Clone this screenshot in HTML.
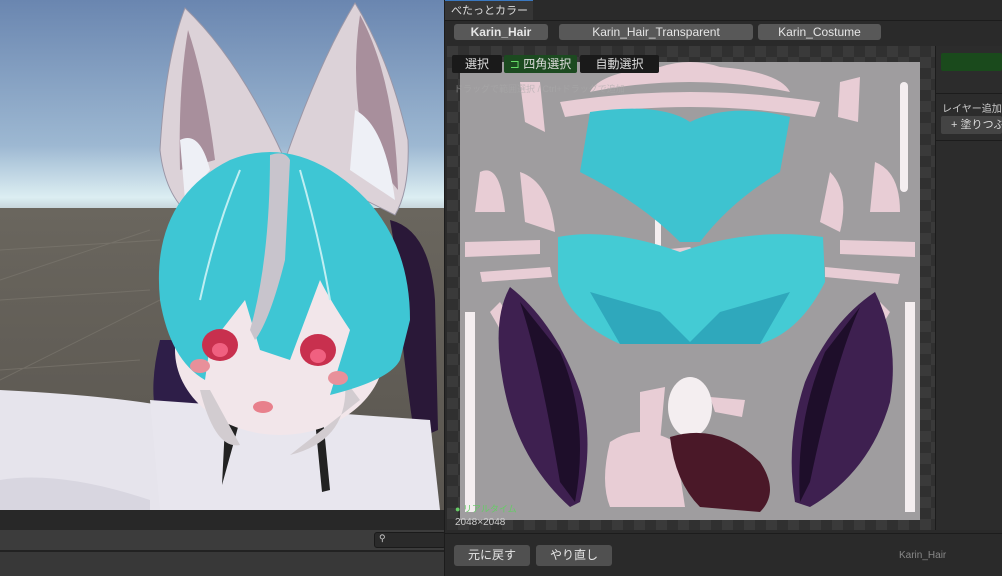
<!DOCTYPE html>
<html><head><meta charset="utf-8"><style>
*{margin:0;padding:0;box-sizing:border-box}
body{width:1002px;height:576px;overflow:hidden;background:#282828;font-family:"Liberation Sans","Noto Sans CJK JP",sans-serif;position:relative}
.a{position:absolute}
.btn{position:absolute;background:#585858;color:#e6e6e6;font-size:12px;text-align:center;border-radius:3px;line-height:16px}
.tool{position:absolute;background:#1a1a1a;color:#ddd;font-size:12px;line-height:18px;text-align:center;border-radius:2px}
</style></head><body>
<svg class="a" style="left:0;top:0" width="444" height="510">
<defs>
<linearGradient id="sky" x1="0" y1="0" x2="0" y2="1"><stop offset="0" stop-color="#6a86b0"/><stop offset="0.7" stop-color="#9db8d2"/><stop offset="0.95" stop-color="#dceef2"/><stop offset="1" stop-color="#c8d6dc"/></linearGradient>
<linearGradient id="gr" x1="0" y1="0" x2="0" y2="1"><stop offset="0" stop-color="#6a665e"/><stop offset="1" stop-color="#59554f"/></linearGradient>
</defs>
<rect width="444" height="208" fill="url(#sky)"/>
<rect y="208" width="444" height="302" fill="url(#gr)"/>
<g stroke="#7a766e" stroke-width="1" fill="none" opacity=".7">
<path d="M0 250 L160 240 M0 300 L150 290 M0 370 L140 360 M0 450 L140 440 M0 280 L150 230 M0 380 L160 300"/>
</g>
<path d="M390 220 Q430 230 435 300 L438 430 L415 440 Q400 340 395 250Z" fill="#2a1838"/>
<path d="M160 340 Q150 380 155 410 L200 410 Q190 370 180 340Z" fill="#2e1e48"/>
<path d="M185 8 Q165 60 160 150 Q165 195 190 215 L285 160 Q240 60 185 8Z" fill="#dcd2d8" stroke="#9a96a6"/>
<path d="M188 30 Q178 90 180 170 L215 160 Q205 80 188 30Z" fill="#a88f9c"/>
<path d="M355 3 Q390 60 408 140 Q410 190 395 215 L285 160 Q320 60 355 3Z" fill="#dcd2d8" stroke="#9a96a6"/>
<path d="M360 15 Q395 80 398 190 L365 150 Q350 80 360 15Z" fill="#a88f9c"/>
<path d="M180 140 Q200 130 210 170 L185 200Z M355 110 Q385 125 395 200 L350 170Z" fill="#eef0f6"/>
<path d="M0 390 Q100 395 160 405 L170 510 L0 510Z" fill="#e6e4ec"/>
<path d="M150 400 L430 420 L440 510 L160 510Z" fill="#e8e6ee"/>
<path d="M0 480 Q60 470 150 500 L150 510 L0 510Z" fill="#d8d6e0"/>
<path d="M225 425 L240 420 L222 485Z M315 420 L323 418 L330 490 L322 492Z" fill="#222"/>
<ellipse cx="280" cy="350" rx="105" ry="85" fill="#f2e6ea"/>
<path d="M200 390 Q215 450 240 445 L210 390Z M345 380 Q350 440 290 455 L360 400Z" fill="#d2ccd0"/>
<path d="M160 300 Q150 200 230 160 Q280 140 330 170 Q410 220 410 320 L400 360 Q390 380 330 395 L350 330 Q330 300 320 280 L290 360 L260 350 L245 300 L210 345 L205 380 Q170 360 160 300Z" fill="#3ec6d4"/>
<path d="M270 155 Q285 150 290 160 L285 260 Q270 320 255 340 L250 330 Q270 260 270 155Z" fill="#c8c4cc"/>
<path d="M300 170 Q320 240 330 300 M240 170 Q215 230 200 300" stroke="#bfeef2" stroke-width="2" fill="none"/>
<ellipse cx="220" cy="345" rx="18" ry="16" fill="#c8304e"/><ellipse cx="220" cy="350" rx="8" ry="7" fill="#f06080"/>
<ellipse cx="318" cy="350" rx="18" ry="16" fill="#c8304e"/><ellipse cx="318" cy="356" rx="8" ry="7" fill="#f06080"/>
<ellipse cx="200" cy="366" rx="10" ry="7" fill="#e8909a"/><ellipse cx="338" cy="378" rx="10" ry="7" fill="#e8909a"/>
<ellipse cx="263" cy="407" rx="10" ry="6" fill="#e8808c"/>
</svg>
<div class="a" style="left:0;top:510px;width:444px;height:20px;background:#282828"></div>
<div class="a" style="left:0;top:530px;width:444px;height:20px;background:#3c3c3c"></div>
<div class="a" style="left:374px;top:532px;width:72px;height:16px;background:#2a2a2a;border:1px solid #1a1a1a;border-radius:3px;color:#ccc;font-size:9px;padding-left:4px">⚲</div>
<div class="a" style="left:0;top:550px;width:444px;height:2px;background:#222"></div>
<div class="a" style="left:0;top:552px;width:444px;height:24px;background:#383838"></div>
<div class="a" style="left:444px;top:0;width:558px;height:576px;background:#2a2a2a;border-left:1px solid #1c1c1c"></div>
<div class="a" style="left:445px;top:0;width:88px;height:20px;background:#363636;color:#ddd;font-size:11px;line-height:20px;padding-left:6px;border-top:1px solid #3a78c0;white-space:nowrap">べたっとカラー</div>
<div class="a" style="left:445px;top:20px;width:557px;height:1px;background:#1c1c1c"></div>
<div class="btn" style="left:454px;top:24px;width:94px;font-weight:bold">Karin_Hair</div>
<div class="btn" style="left:559px;top:24px;width:194px">Karin_Hair_Transparent</div>
<div class="btn" style="left:758px;top:24px;width:123px">Karin_Costume</div>
<div class="a" style="left:447px;top:46px;width:488px;height:484px;background:repeating-conic-gradient(#303030 0 25%,#3a3a3a 0 50%) 0 0/22px 22px"></div>
<svg class="a" style="left:460px;top:62px" width="460" height="458">
<rect width="460" height="458" fill="#9f9d9f"/>
<g fill="#e8cdd5">
<path d="M200 5 Q230 -5 260 5 Q320 10 330 30 Q230 10 130 30 Q140 10 200 5Z"/>
<path d="M100 40 Q230 20 360 40 L355 55 Q230 35 105 55Z"/>
<path d="M60 20 L80 20 L85 70 L65 60Z M380 20 L400 15 L398 60 L378 55Z"/>
<path d="M20 110 Q40 100 45 150 L15 150Z M415 100 Q440 110 440 150 L410 150Z"/>
<path d="M60 110 Q90 120 95 170 L65 160Z M370 110 Q390 130 380 170 L360 160Z"/>
<path d="M5 180 L80 178 L80 192 L5 195Z M380 178 L455 180 L455 195 L380 192Z"/>
<path d="M20 210 L90 205 L92 215 L22 220Z M365 205 L440 212 L438 222 L365 215Z"/>
<path d="M40 240 Q80 300 110 380 L100 390 Q60 300 30 250Z M420 240 Q380 300 350 380 L360 390 Q400 300 430 250Z"/>
<path d="M180 190 L230 185 L245 200 L225 215 Z"/>
<path d="M150 380 Q180 360 215 380 L225 445 L150 445 Q140 420 150 380Z"/>
<path d="M180 330 L205 325 L200 380 L180 378Z M250 335 L285 338 L282 355 L255 350Z"/>
</g>
<g fill="#f4eef0"><rect x="440" y="20" width="8" height="110" rx="4"/><rect x="5" y="250" width="10" height="200"/><rect x="445" y="240" width="10" height="210"/><rect x="195" y="150" width="6" height="35"/><ellipse cx="230" cy="345" rx="22" ry="30"/></g>
<path d="M98 175 Q150 165 220 190 Q290 165 363 175 L365 220 Q340 270 300 282 L160 282 Q110 260 98 220Z" fill="#44cbd4"/>
<path d="M130 50 Q200 40 230 60 Q270 40 330 55 L320 110 Q270 140 240 180 L220 180 Q180 140 120 110Z" fill="#3ec3d0"/>
<path d="M130 230 L200 250 L230 280 L260 250 L330 230 L300 282 L160 282Z" fill="#2fa8bc"/>
<path d="M50 225 Q30 260 45 330 Q60 400 110 445 L120 440 Q135 380 120 330 Q95 260 50 225Z" fill="#3e2050"/>
<path d="M60 240 Q80 300 100 420 L115 440 Q130 360 100 290Z" fill="#1e0e2a"/>
<path d="M415 230 Q440 280 430 340 Q410 410 350 445 L335 440 Q325 380 345 320 Q370 260 415 230Z" fill="#3e2050"/>
<path d="M400 245 Q375 300 350 420 L340 440 Q335 360 365 290Z" fill="#1e0e2a"/>
<path d="M210 375 Q260 360 300 400 Q320 430 300 450 L240 445 Q215 420 210 375Z" fill="#4a1828"/>
</svg>
<div class="tool" style="left:452px;top:55px;width:50px">選択</div>
<div class="tool" style="left:504px;top:55px;width:73px;background:#1c4a20"><span style="color:#6d6">⊐</span> 四角選択</div>
<div class="tool" style="left:580px;top:55px;width:79px">自動選択</div>
<div class="a" style="left:454px;top:82px;color:#aaa;font-size:9px;opacity:.6">ドラッグで範囲選択 / Ctrl+ドラッグで追加</div>
<div class="a" style="left:455px;top:502px;color:#6c6;font-size:9px">● リアルタイム</div>
<div class="a" style="left:455px;top:517px;color:#ccc;font-size:10px">2048×2048</div>
<div class="a" style="left:935px;top:46px;width:67px;height:484px;background:#2c2c2c;border-left:1px solid #1c1c1c"></div>
<div class="a" style="left:941px;top:53px;width:61px;height:18px;background:#1a4a1c;border-radius:2px"></div>
<div class="a" style="left:936px;top:93px;width:66px;height:1px;background:#1c1c1c"></div>
<div class="a" style="left:942px;top:100px;color:#ccc;font-size:10px;white-space:nowrap">レイヤー追加</div>
<div class="a" style="left:941px;top:116px;width:61px;height:18px;background:#444;color:#ddd;font-size:11px;line-height:18px;padding-left:10px;border-radius:2px;white-space:nowrap;overflow:hidden">+ 塗りつぶ</div>
<div class="a" style="left:936px;top:140px;width:66px;height:1px;background:#1c1c1c"></div>
<div class="a" style="left:445px;top:533px;width:557px;height:1px;background:#1c1c1c"></div>
<div class="btn" style="left:454px;top:545px;width:76px;height:21px;line-height:21px;background:#505050">元に戻す</div>
<div class="btn" style="left:536px;top:545px;width:76px;height:21px;line-height:21px;background:#505050">やり直し</div>
<div class="a" style="left:899px;top:550px;color:#888;font-size:10px">Karin_Hair</div>
</body></html>
